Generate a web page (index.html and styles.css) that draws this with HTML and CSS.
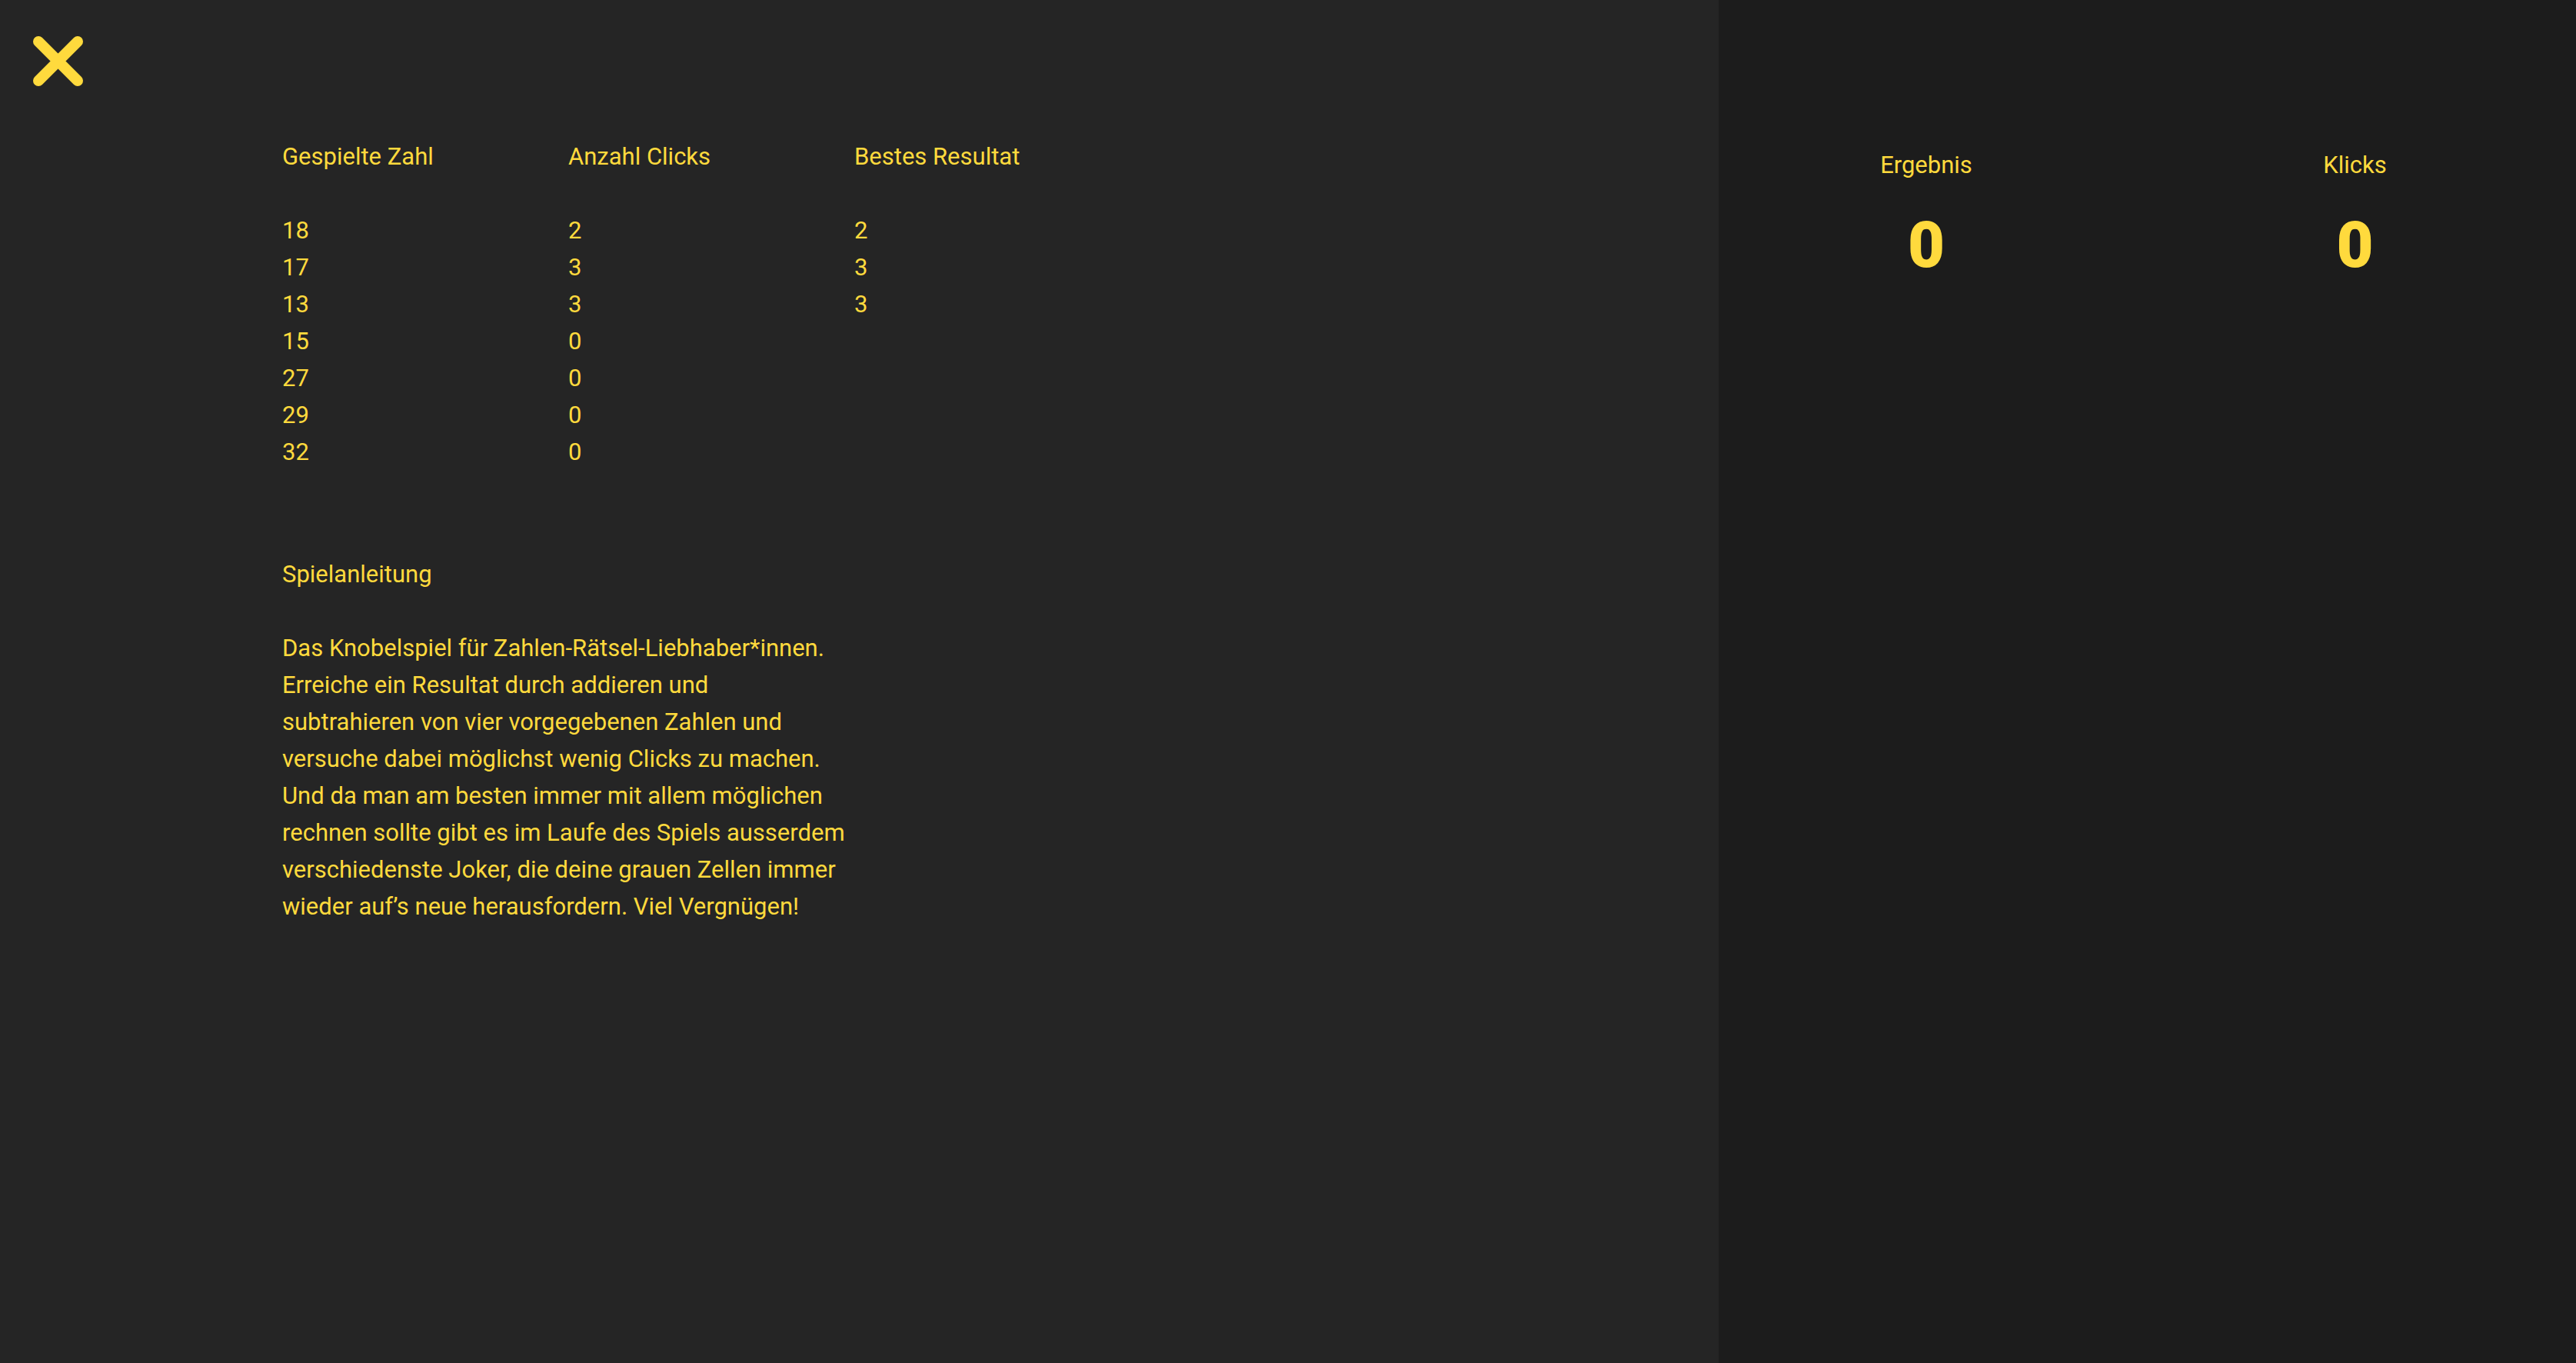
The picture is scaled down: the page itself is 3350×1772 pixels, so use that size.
FILE: index.html
```html
<!DOCTYPE html>
<html lang="de">
<head>
<meta charset="utf-8">
<title>Knobelspiel</title>
<link rel="stylesheet" href="styles.css">
</head>
<body>
<div class="app">
  <main class="info">
    <button class="close" aria-label="Schliessen">
      <svg width="66" height="66" viewBox="0 0 66 66"><path d="M7 7 L58 58 M58 7 L7 58" stroke="#ffda3d" stroke-width="14" stroke-linecap="round" fill="none"/></svg>
    </button>
    <div class="content">
      <div class="stats">
        <div class="row head"><span>Gespielte Zahl</span><span>Anzahl Clicks</span><span>Bestes Resultat</span></div>
        <div class="row"><span>18</span><span>2</span><span>2</span></div>
        <div class="row"><span>17</span><span>3</span><span>3</span></div>
        <div class="row"><span>13</span><span>3</span><span>3</span></div>
        <div class="row"><span>15</span><span>0</span><span></span></div>
        <div class="row"><span>27</span><span>0</span><span></span></div>
        <div class="row"><span>29</span><span>0</span><span></span></div>
        <div class="row"><span>32</span><span>0</span><span></span></div>
      </div>
      <section class="rules">
        <h2 class="rules-title">Spielanleitung</h2>
        <p class="rules-text">Das Knobelspiel für Zahlen-Rätsel-Liebhaber*innen.<br>Erreiche ein Resultat durch addieren und<br>subtrahieren von vier vorgegebenen Zahlen und<br>versuche dabei möglichst wenig Clicks zu machen.<br>Und da man am besten immer mit allem möglichen<br>rechnen sollte gibt es im Laufe des Spiels ausserdem<br>verschiedenste Joker, die deine grauen Zellen immer<br>wieder auf’s neue herausfordern. Viel Vergnügen!</p>
      </section>
    </div>
  </main>
  <aside class="score">
    <div class="score-item"><div class="score-label">Ergebnis</div><div class="score-value">0</div></div>
    <div class="score-item"><div class="score-label">Klicks</div><div class="score-value">0</div></div>
  </aside>
</div>
</body>
</html>
```
FILE: styles.css
```css
* { box-sizing: border-box; }
html, body { margin: 0; padding: 0; }
body {
  font-family: Roboto, "Liberation Sans", sans-serif;
  font-size: 31px;
  line-height: 48px;
  color: #ffda3d;
  background: #252525;
}
.app {
  display: grid;
  grid-template-columns: 2235px 1fr;
  height: 1772px;
  overflow: hidden;
}
.info {
  position: relative;
  background: #252525;
  padding: 180px 0 0 367px;
}
.close {
  position: absolute;
  left: 43px;
  top: 47px;
  width: 66px;
  height: 66px;
  padding: 0;
  border: 0;
  background: none;
  cursor: pointer;
}
.close svg { display: block; }
.content { width: 1120px; }
.stats { display: flex; flex-direction: column; }
.row {
  display: grid;
  grid-template-columns: 372px 372px 372px;
  height: 48px;
}
.row.head { margin-bottom: 48px; }
.rules { margin-top: 111px; }
.rules-title {
  margin: 0 0 48px;
  font-size: 31px;
  font-weight: 400;
  line-height: 48px;
}
.rules-text {
  margin: 0;
  white-space: nowrap;
}
.score {
  background: #1c1c1c;
  display: grid;
  grid-template-columns: 540px 1fr;
  align-content: start;
  padding-top: 191px;
}
.score-item {
  display: flex;
  flex-direction: column;
  align-items: center;
}
.score-label { line-height: 48px; }
.score-value {
  margin-top: 38px;
  font-size: 83px;
  font-weight: 900;
  line-height: 83px;
}
```
